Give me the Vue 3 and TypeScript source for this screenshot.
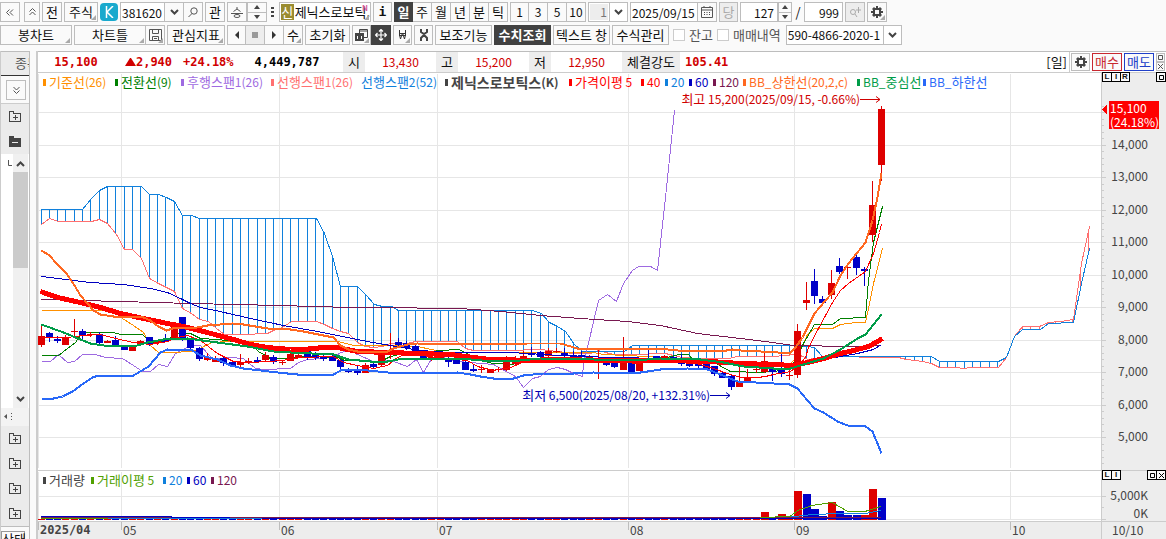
<script setup lang="ts">
import { ref } from 'vue'

type Pt = [number, number]
type Candle = [number, number, number, number, 0 | 1]

const STEP = 8.317
const FIRST = 41
const xAt = (i: number) => Math.floor(FIRST + STEP * i)

const parse = (s: string): Pt[] =>
  s.trim().split(/\s+/).map((p) => p.split(',').map(Number) as Pt)

const yOn = (pts: Pt[], x: number): number => {
  for (let k = 1; k < pts.length; k++) {
    const [x0, y0] = pts[k - 1]
    const [x1, y1] = pts[k]
    if (x <= x1) return y0 + ((y1 - y0) * Math.max(0, x - x0)) / (x1 - x0)
  }
  return pts[pts.length - 1][1]
}

const spanB = '41,209 82,209 91,198 99,190 107,186 141,186 149,194 158,194 166,197 174,201 182,215 191,215 199,218 316,218 324,233 332,256 340,286 357,286 365,294 374,304 382,306 391,306 398,310 532,310 541,313 549,322 557,326 565,331 574,344 582,351 624,351 632,345 797,345 806,346 814,347 822,356 931,356 939,361 998,361 1006,357 1014,336 1022,329 1040,329 1048,323 1073,322 1081,283 1089,248'
const spanA = '41,224 49,218 58,221 91,221 99,219 107,223 116,234 124,249 132,249 141,258 149,278 158,283 166,287 174,291 182,308 191,313 199,319 208,321 216,328 224,334 243,334 267,333 275,329 282,327 291,321 316,321 324,324 332,328 340,331 348,333 357,342 365,346 373,347 382,346 390,343 407,343 415,341 457,341 465,348 473,350 507,350 540,349 557,351 573,353 590,353 598,350 605,352 613,354 633,354 665,353 673,355 682,357 698,358 728,358 737,356 773,356 795,354 803,356 807,359 823,357 840,356 877,357 898,357 906,359 922,361 931,363 939,367 955,367 964,368 970,367 998,367 1006,357 1014,336 1022,326 1039,326 1048,322 1060,321 1073,319 1081,263 1089,226'

const a = parse(spanA)
const b = parse(spanB)
const hatch = Array.from({ length: 127 }, (_, i) => {
  const x = xAt(i)
  const ya = yOn(a, x)
  const yb = yOn(b, x)
  return { x: x + 0.5, y1: Math.min(ya, yb), y2: Math.max(ya, yb), up: ya < yb }
}).filter((h) => h.y2 - h.y1 > 1)

const backLines = [
  { c: 'span-a', p: spanA },
  { c: 'span-b', p: spanB },
  { c: 'lagging', p: '41,361 50,361 58,354 67,362 74,361 82,354 95,354 105,357 122,358 133,365 142,371 150,371 158,364 167,366 175,353 188,346 200,345 207,353 213,359 230,357 243,358 255,368 263,369 290,368 298,362 307,359 333,357 340,352 350,350 357,354 373,361 390,360 407,366 416,359 423,372 432,357 443,357 457,361 470,362 493,364 515,376 523,387 532,378 540,376 548,369 557,367 565,369 573,373 582,376 583,363 587,347 598,300 607,294 616,301 623,283 632,270 638,266 650,266 657,270 665,197 674,110' },
  { c: 'base', p: '41,310 117,310 122,318 133,325 143,332 150,345 158,352 175,352 197,350 203,346 212,342 227,341 338,341 353,345 390,345 417,346 445,352 570,352 593,352 603,354 647,356 707,360 740,364 790,363 793,360 798,354 807,334 814,328 832,328 840,324 855,322 865,322 868,308 873,283 882,248' },
  { c: 'conv', p: '41,355 58,355 67,348 75,342 82,332 113,332 120,334 142,334 150,342 166,340 175,333 190,333 200,338 217,339 233,341 253,345 258,351 270,358 290,358 300,356 337,357 345,360 380,361 390,356 403,353 423,352 440,350 458,349 465,352 480,360 493,363 513,364 523,358 573,359 627,358 663,358 678,354 688,354 693,360 710,360 730,371 760,372 782,370 793,363 798,353 803,343 814,324 832,324 840,318 865,317 868,280 873,242 882,206' },
]

const frontLines = [
  { c: 'ma120', p: '41,299 120,301 190,303 235,304 280,305 312,306 352,307 393,307 440,308 460,308 500,311 540,315 580,318 627,321 660,325 697,333 740,338 765,341 793,345 850,346 881,345' },
  { c: 'ma5', p: '41,337 67,337 83,335 100,334 115,338 133,342 150,344 167,341 177,337 187,335 200,340 217,353 233,361 247,362 270,361 290,359 300,357 333,356 343,362 357,365 373,368 387,365 397,357 407,353 443,358 467,360 477,366 493,370 510,367 527,360 543,357 577,357 603,360 637,363 660,360 693,362 713,368 727,373 740,377 757,377 765,376 773,374 790,371 798,365 805,357 808,347 818,328 832,302 840,290 848,283 865,271 873,253 879,232 881,224' },
  { c: 'ma60', p: '41,276 90,282 123,284 150,288 167,292 182,299 190,303 200,307 215,310 250,318 283,325 317,331 347,337 367,341 390,345 407,348 420,350 450,352 510,352 560,355 610,357 667,358 727,361 760,362 807,363 823,359 840,356 857,353 873,349 881,344' },
  { c: 'ma40', p: '40,291 57,297 80,302 100,307 120,313 143,318 167,323 183,326 203,331 233,339 250,344 267,347 290,349 303,349 323,347 337,347 357,351 390,352 417,353 450,354 473,357 490,359 540,360 660,360 710,361 740,363 773,364 793,365 807,362 823,358 840,353 853,350 868,346 877,341 882,338' },
  { c: 'bb-mid', p: '41,324 63,332 80,339 90,343 103,345 133,346 147,342 163,339 187,338 217,342 247,346 273,351 290,352 333,354 348,359 370,361 387,361 403,358 430,358 470,359 493,361 520,360 540,358 593,359 633,360 660,358 700,359 723,362 743,366 773,368 790,368 803,364 823,358 840,349 857,338 865,334 873,324 881,314' },
  { c: 'bb-up', p: '41,250 49,255 57,264 66,273 74,285 80,295 87,303 93,310 100,314 113,316 133,316 143,317 150,320 158,326 166,330 172,328 197,327 207,325 232,323 243,324 267,328 290,329 303,331 323,335 333,337 340,345 348,349 357,351 387,351 393,348 407,344 417,343 470,344 527,343 560,343 577,348 627,348 667,349 677,350 720,351 732,349 740,350 760,351 777,352 789,353 795,347 802,337 814,313 825,300 832,292 840,275 848,263 865,242 872,220 877,197 881,173' },
  { c: 'bb-low', p: '41,398 53,398 62,396 72,391 83,383 92,377 98,375 133,375 148,366 160,352 167,349 192,350 200,355 217,359 230,365 243,368 277,372 297,374 333,374 342,369 357,369 387,372 403,373 457,372 470,374 480,376 493,378 513,378 523,375 543,373 573,373 593,372 633,373 647,371 660,369 687,368 707,369 720,374 737,381 773,383 789,384 797,388 807,400 814,408 823,412 837,421 847,425 865,426 872,431 877,443 881,453' },
]

// high, low, body top, body bottom, 1 = rising
const candles: Candle[] = [
  [325, 347, 336, 345, 1], [332, 342, 333, 337, 0], [336, 343, 339, 341, 0], [335, 345, 338, 345, 1], [319, 337, 331, 332, 1],
  [329, 339, 331, 336, 0], [332, 337, 334, 335, 1], [332, 344, 334, 343, 0], [340, 343, 341, 343, 1], [336, 347, 340, 346, 0],
  [345, 350, 347, 350, 0], [346, 351, 347, 351, 1], [340, 346, 341, 345, 1], [337, 346, 337, 345, 0], [340, 345, 341, 343, 1],
  [334, 342, 340, 342, 0], [327, 338, 327, 338, 1], [317, 341, 317, 340, 0], [339, 349, 340, 348, 0], [347, 361, 348, 359, 0],
  [353, 361, 357, 360, 1], [356, 362, 359, 362, 1], [356, 366, 358, 363, 0], [362, 367, 362, 366, 0], [354, 367, 362, 365, 1],
  [358, 364, 361, 363, 1], [357, 362, 360, 362, 0], [352, 361, 355, 360, 1], [355, 364, 357, 362, 0], [360, 365, 362, 363, 1],
  [353, 361, 354, 361, 1], [353, 358, 355, 358, 1], [350, 360, 351, 357, 0], [352, 360, 353, 358, 0], [355, 361, 357, 359, 0],
  [355, 361, 356, 361, 0], [359, 369, 360, 367, 0], [368, 373, 370, 372, 0], [366, 375, 370, 373, 0], [363, 373, 365, 373, 1],
  [362, 368, 364, 367, 0], [354, 367, 355, 365, 1], [333, 359, 345, 346, 1], [338, 347, 342, 345, 0], [341, 350, 343, 348, 0],
  [345, 352, 346, 351, 0], [353, 360, 354, 360, 0], [356, 361, 357, 360, 1], [355, 359, 356, 359, 1], [357, 367, 358, 362, 0],
  [359, 364, 360, 364, 0], [361, 370, 362, 370, 0], [365, 372, 369, 371, 0], [365, 373, 369, 370, 1], [369, 373, 369, 373, 1],
  [367, 372, 369, 370, 1], [356, 371, 362, 370, 1], [356, 365, 358, 364, 1], [351, 360, 356, 359, 1], [347, 357, 353, 355, 0],
  [351, 357, 352, 357, 0], [348, 357, 351, 356, 1], [348, 353, 351, 352, 1], [348, 357, 353, 356, 0], [351, 360, 355, 358, 0],
  [351, 360, 355, 356, 0], [355, 360, 356, 359, 1], [350, 379, 358, 360, 1], [361, 366, 362, 365, 0], [361, 368, 362, 367, 0],
  [337, 370, 362, 370, 1], [361, 372, 362, 372, 0], [361, 371, 362, 371, 1], [349, 360, 358, 360, 0], [356, 359, 356, 358, 0],
  [355, 359, 356, 358, 1], [356, 362, 357, 361, 0], [354, 366, 360, 364, 0], [360, 367, 364, 366, 0], [362, 368, 363, 366, 0],
  [363, 370, 363, 369, 0], [366, 376, 366, 374, 0], [372, 378, 373, 378, 0], [375, 390, 376, 387, 0], [363, 387, 382, 387, 1],
  [369, 382, 377, 381, 1], [363, 373, 369, 370, 1], [352, 373, 361, 372, 1], [366, 381, 369, 372, 0], [353, 377, 369, 374, 0],
  [370, 380, 375, 376, 1], [324, 378, 331, 375, 1], [282, 310, 300, 303, 1], [269, 304, 281, 296, 0], [296, 306, 299, 303, 0],
  [270, 299, 283, 295, 1], [258, 274, 266, 272, 0], [267, 279, 267, 268, 1], [255, 275, 257, 268, 0], [267, 286, 269, 271, 0],
  [181, 242, 205, 235, 1], [106, 181, 109, 165, 1],
]

const bigVolume: Record<number, number> = {
  87: 8, 89: 6, 91: 29, 92: 26, 93: 11, 94: 4, 95: 18, 96: 9, 97: 5, 98: 5, 99: 5, 100: 31, 101: 22,
}
const redVolume = new Set([87, 89, 91, 95, 99, 100])
const volumes = candles.map((c, i) => ({
  x: xAt(i) - 3,
  h: bigVolume[i] ?? 1,
  up: i in bigVolume ? redVolume.has(i) : c[4] === 1,
}))

const gridY = Array.from({ length: 11 }, (_, i) => Math.floor(437.5 - 32.5 * i))
const prices = gridY.slice(0, 10).map((y, i) => ({ y, text: (5000 + i * 1000).toLocaleString('en-US') }))
const minorY = Array.from({ length: 60 }, (_, i) => Math.floor(463.5 - 6.5 * i)).filter((y) => y > 100)

const pct = (x: number) => ((x - 38) / 1063) * 100 + '%'
const months = [
  { x: 38, t: '2025/04' }, { x: 121, t: '05' }, { x: 279, t: '06' }, { x: 437, t: '07' },
  { x: 628, t: '08' }, { x: 794, t: '09' }, { x: 1010, t: '10' },
]

interface Entry { t: string; c: string; mark?: boolean; bold?: boolean }
const legend: Entry[] = [
  { t: '기준선(26)', c: 'base' }, { t: '전환선(9)', c: 'conv' }, { t: '후행스팬1(26)', c: 'lagging' },
  { t: '선행스팬1(26)', c: 'span-a' }, { t: '선행스팬2(52)', c: 'span-b', mark: false },
  { t: '제닉스로보틱스(K)', c: 'ink', bold: true }, { t: '가격이평 5', c: 'red' }, { t: '40', c: 'red' },
  { t: '20', c: 'span-b' }, { t: '60', c: 'ma60' }, { t: '120', c: 'ma120' },
  { t: 'BB_상한선(20,2,c)', c: 'bb-up' }, { t: 'BB_중심선', c: 'bb-mid' }, { t: 'BB_하한선', c: 'bb-low' },
]
const volLegend: Entry[] = [
  { t: '거래량', c: 'ink' }, { t: '거래이평 5', c: 'vol5' }, { t: '20', c: 'span-b' },
  { t: '60', c: 'ma60' }, { t: '120', c: 'ma120' },
]
const notes = {
  high: '최고 15,200(2025/09/15, -0.66%)',
  low: '최저 6,500(2025/08/20, +132.31%)',
}
const cells = (s: string) => [...s].reduce((n, ch) => n + (ch > '\u3000' ? 2 : 1), 0)
const entryWidth = (e: Entry) => cells(e.t) * 6 + (e.mark === false ? 6 : 12) + (e.bold ? 10 : 0) + 'px'
// Latin runs are set one size smaller than Hangul runs
const runs = (s: string) =>
  (s.match(/[ -~]+|[^ -~]+/g) ?? []).map((t) => ({ t, latin: t < '\u007f' }))

const periods = ['일', '주', '월', '년', '분', '틱']
const period = ref('일')
const counts = ['1', '3', '5', '10']
const code = ref('381620')
const date = ref('2025/09/15')
const shown = ref('127')
const total = ref('999')
const balance = ref(false)
const trades = ref(false)
</script>

<template>
  <div class="app">
    <svg class="defs" aria-hidden="true">
      <symbol id="i-chev" viewBox="0 0 9 6"><path d="M1 1l3.500 3.500L8 1" fill="none" stroke="#444" stroke-width="2" /></symbol>
      <symbol id="i-gear" viewBox="0 0 12 12">
        <path d="M5 0h2v2h1l1-1 2 2-1 1v1h2v2h-2v1l1 1-2 2-1-1H7v2H5v-2H4l-1 1-2-2 1-1V7H0V5h2V4L1 3l2-2 1 1h1zM4 4v4h4V4z" fill="#444" fill-rule="evenodd" />
      </symbol>
      <symbol id="i-folder" viewBox="0 0 12 11">
        <path d="M.5.500h4v2h7v8H.5zM6 4v5M3.500 6.500h5" fill="none" stroke="#444" stroke-width="1" shape-rendering="crispEdges" />
      </symbol>
      <symbol id="i-up" viewBox="0 0 6 4"><path d="M0 4h6L3 0z" fill="#444" /></symbol>
      <symbol id="i-down" viewBox="0 0 6 4"><path d="M0 0h6L3 4z" fill="#444" /></symbol>
      <symbol id="i-corner" viewBox="0 0 5 5"><path d="M5 0v5H0z" fill="#aaa" /></symbol>
    </svg>

    <header class="bars">
      <div class="bar">
        <button class="w20" aria-label="이전"><svg width="8" height="7"><path d="M3.500 .5l-3 3 3 3M7 .5l-3 3 3 3" class="thin" /></svg></button>
        <button class="w16 push" aria-label="접기"><svg width="7" height="8"><path d="M.5 3.500l3-3 3 3M.5 7l3-3 3 3" class="thin" /></svg></button>
        <button class="w20">전</button>
        <button class="w34">주식<svg class="corner"><use href="#i-corner" /></svg></button>
        <button class="kbtn" aria-label="코스닥"><svg width="10" height="12"><path d="M2.500 0v12M9 0L3 6l6 6" fill="none" stroke="#fff" stroke-width="1.500" /></svg></button>
        <div class="group">
          <input v-model="code" class="w45 code" aria-label="종목코드" />
          <button class="w19" aria-label="목록"><svg width="9" height="6"><use href="#i-chev" /></svg></button>
          <button class="w19" aria-label="검색"><svg width="10" height="10"><circle cx="6" cy="4" r="3.200" class="thin" /><path d="M4 6.500L.5 10" class="thin" /></svg></button>
        </div>
        <button class="w20">관</button>
        <div class="group">
          <button class="w20" aria-label="승"><svg width="12" height="11"><path d="M6 0v2L2.500 4.500M6 2l3.500 2.500M0 6.500h12M6 6.500V8" class="thin" /><ellipse cx="6" cy="9" rx="3" ry="1.500" class="thin" /></svg></button>
          <span class="spin w20">
            <button aria-label="위"><svg width="6" height="4"><use href="#i-up" /></svg></button>
            <button aria-label="아래"><svg width="6" height="4"><use href="#i-down" /></svg></button>
          </span>
          <button class="w10 bare" aria-label="더보기"><svg width="3" height="11"><path d="M0 0h3v2H0zM0 4h3v2H0zM0 8h3v2H0z" fill="#444" /></svg></button>
        </div>
        <button class="name"><b>신</b><span>제닉스로보틱.</span><i>N</i><svg class="corner"><use href="#i-corner" /></svg></button>
        <button class="w19 info">i</button>
        <div class="group">
          <button v-for="p in periods" :key="p" class="w19" :class="{ on: p === period }" @click="period = p">{{ p }}</button>
        </div>
        <div class="group">
          <button v-for="n in counts" :key="n" class="w19 small">{{ n }}</button>
        </div>
        <label class="pick w40 muted">
          <select aria-label="간격"><option>1</option></select>
          <span><svg width="9" height="6"><use href="#i-chev" /></svg></span>
        </label>
        <div class="group">
          <input v-model="date" class="w68" aria-label="날짜" />
          <button class="w19" aria-label="달력"><svg width="12" height="12"><path d="M.5 1.500h11v10H.5zM.5 4h11M3 0v2M9 0v2" class="thin" /><path d="M3 6h1v1H3zM5.500 6h1v1h-1zM8 6h1v1H8zM3 8h1v1H3zM5.500 8h1v1h-1zM8 8h1v1H8z" fill="#444" /></svg></button>
        </div>
        <button class="w19 off">당</button>
        <div class="group">
          <input v-model="shown" class="w38 num" aria-label="표시 봉수" />
          <span class="spin w14">
            <button aria-label="증가"><svg width="6" height="4"><use href="#i-up" /></svg></button>
            <button aria-label="감소"><svg width="6" height="4"><use href="#i-down" /></svg></button>
          </span>
        </div>
        <span class="slash">/</span>
        <input v-model="total" class="w39 num" aria-label="전체 봉수" />
        <button class="w20 off" aria-label="확대"><svg width="12" height="10"><circle cx="4" cy="5" r="2.500" class="faint" /><path d="M6 7l2 3M9.500 0v6M7 3h5" class="faint" /></svg></button>
        <button class="w20" aria-label="설정"><svg width="12" height="12"><use href="#i-gear" /></svg><svg class="corner"><use href="#i-corner" /></svg></button>
      </div>

      <div class="bar">
        <button class="w72">봉차트<svg class="corner"><use href="#i-corner" /></svg></button>
        <div class="group">
          <button class="w72">차트틀<svg class="corner"><use href="#i-corner" /></svg></button>
          <button class="w19" aria-label="저장"><svg width="13" height="12"><path d="M.5.500h12v11H.5zM3.500.500v4h6v-4M3.500 11.500v-4h6v4M5 9.500h3" class="thin" /></svg><svg class="corner"><use href="#i-corner" /></svg></button>
        </div>
        <button class="w58">관심지표<svg class="corner"><use href="#i-corner" /></svg></button>
        <div class="group">
          <button class="w19" aria-label="왼쪽"><svg width="4" height="8"><path d="M4 0v8L0 4z" fill="#333" /></svg></button>
          <button class="w19 shade" aria-label="정지"><svg width="6" height="6"><path d="M0 0h6v6H0z" fill="#999" /></svg></button>
          <button class="w19" aria-label="오른쪽"><svg width="4" height="8"><path d="M0 0v8l4-4z" fill="#333" /></svg></button>
          <button class="w19">수<svg class="corner"><use href="#i-corner" /></svg></button>
        </div>
        <button class="w45">초기화</button>
        <div class="group">
          <button class="w19" aria-label="창 배열"><svg width="13" height="12"><path d="M4.500 4V.500h8v8H9M4.500 2h8" fill="none" stroke="#444" stroke-width="1" /><path d="M0 4h9v8H0zM2 7v3h1V7zM6 7v3h1V7z" fill="#444" fill-rule="evenodd" /></svg><svg class="corner"><use href="#i-corner" /></svg></button>
          <button class="w20 on" aria-label="십자선"><svg width="12" height="12"><path d="M6 1v10M1 6h10M4 2.500L6 .5l2 2M4 9.500l2 2 2-2M2.500 4l-2 2 2 2M9.500 4l2 2-2 2" fill="none" stroke="#fff" stroke-width="1.200" /></svg></button>
        </div>
        <button class="w19" aria-label="원화"><svg width="7" height="10"><path d="M.5 0v5l1 4 2-6 2 6 1-4V0M0 3.500h7M0 5.500h7" fill="none" stroke="#333" /></svg><svg class="corner"><use href="#i-corner" /></svg></button>
        <button class="w19" aria-label="도구"><svg width="8" height="12"><path d="M1 0v3l3 2 3-2V0M1 12V9l3-3 3 3v3" fill="none" stroke="#444" stroke-width="2" /></svg></button>
        <button class="w57">보조기능</button>
        <button class="w57 on">수치조회</button>
        <button class="w57">텍스트 창</button>
        <button class="w57">수식관리</button>
        <label class="check"><input v-model="balance" type="checkbox" />잔고</label>
        <label class="check"><input v-model="trades" type="checkbox" />매매내역</label>
        <label class="pick account">
          <select aria-label="계좌번호"><option>590-4866-2020-1</option></select>
          <span><svg width="9" height="6"><use href="#i-chev" /></svg></span>
        </label>
      </div>
    </header>

    <main class="body">
      <aside class="side">
        <div class="tab">종목</div>
        <div class="fold"><button aria-label="펼치기"><svg width="7" height="8"><path d="M.5 1l3 3 3-3M.5 4.500l3 3 3-3" class="thin" /></svg></button></div>
        <button class="node" aria-label="폴더 열기"><svg width="12" height="11"><use href="#i-folder" /></svg></button>
        <button class="node" aria-label="폴더 닫기"><svg width="12" height="11"><path d="M0 0h5v2h7v9H0zM3 6v1h6V6z" fill="#444" fill-rule="evenodd" /></svg></button>
        <div class="tree">
          <div class="leaf"><svg width="4" height="6"><path d="M.5 0v5.500H4" class="thin" /></svg></div>
          <div class="scroll">
            <svg width="9" height="6" class="flip"><use href="#i-chev" /></svg>
            <div class="thumb"></div>
            <svg width="9" height="6"><use href="#i-chev" /></svg>
          </div>
        </div>
        <div class="split"><svg width="9" height="7"><path d="M3 1v5L0 3.500zM7 0h1v1H7zM7 3h1v1H7zM7 6h1v1H7z" fill="#555" /></svg></div>
        <button v-for="n in 4" :key="n" class="node" aria-label="폴더 열기"><svg width="12" height="11"><use href="#i-folder" /></svg></button>
        <div class="foot"><span>상태</span></div>
      </aside>

      <section class="chart">
        <div class="quote">
          <strong class="q1">15,100</strong>
          <strong class="q2"><svg width="11" height="8"><path d="M0 8h11L6 0H5z" fill="#d00000" /></svg>2,940</strong>
          <strong class="q3">+24.18%</strong>
          <strong class="q4">4,449,787</strong>
          <span class="tag">시</span><span class="val">13,430</span>
          <span class="tag">고</span><span class="val">15,200</span>
          <span class="tag">저</span><span class="val">12,950</span>
          <span class="tag wide">체결강도</span><strong class="q5">105.41</strong>
          <span class="unit">[일]</span>
          <button class="cog" aria-label="설정"><svg width="12" height="12"><use href="#i-gear" /></svg></button>
          <button class="buy">매수</button>
          <button class="sell">매도</button>
          <span class="win">
            <button aria-label="최대화"><svg width="5" height="5"><path d="M.5.500h4v4h-4z" class="thin" /></svg></button>
            <button aria-label="닫기"><svg width="5" height="5"><path d="M0 0l5 5M5 0L0 5" class="thin" /></svg></button>
          </span>
        </div>

        <div class="pane">
          <div class="plot">
            <svg class="canvas price" viewBox="38 73 1063 397" preserveAspectRatio="none" shape-rendering="crispEdges">
              <g class="grid">
                <path v-for="y in gridY" :key="y" :d="`M38 ${y + 0.5}H1101`" />
                <path v-for="m in months" :key="m.x" :d="`M${m.x + 0.5} 74V468`" />
              </g>
              <path v-for="h in hatch" :key="h.x" :d="`M${h.x} ${h.y1}V${h.y2}`" :class="h.up ? 'span-a' : 'span-b'" />
              <polyline v-for="l in backLines" :key="l.c" :points="l.p" :class="l.c" transform="translate(0.500 0.500)" />
              <g v-for="(c, i) in candles" :key="i" :class="c[4] ? 'rise' : 'fall'">
                <rect :x="xAt(i)" :y="c[0]" width="1" :height="c[1] - c[0]" />
                <rect :x="xAt(i) - 3" :y="c[2]" width="7" :height="c[3] - c[2]" />
              </g>
              <polyline v-for="l in frontLines" :key="l.c" :points="l.p" :class="l.c" transform="translate(0.500 0.500)" />
            </svg>
            <div class="legend">
              <span v-for="e in legend" :key="e.t" class="entry" :class="[e.c, { bold: e.bold, nomark: e.mark === false }]" :style="{ width: entryWidth(e) }"><span v-for="r in runs(e.t)" :key="r.t" :class="{ latin: r.latin }">{{ r.t }}</span></span>
            </div>
            <div class="note high" :style="{ right: pct(258) }"><span v-for="r in runs(notes.high)" :key="r.t" :class="{ latin: r.latin }">{{ r.t }}</span><svg width="21" height="7"><path d="M0 3.500h20M16 .5l4 3-4 3" fill="none" stroke="currentColor" /></svg></div>
            <div class="note low" :style="{ right: pct(408) }"><span v-for="r in runs(notes.low)" :key="r.t" :class="{ latin: r.latin }">{{ r.t }}</span><svg width="21" height="7"><path d="M0 3.500h20M16 .5l4 3-4 3" fill="none" stroke="currentColor" /></svg></div>
          </div>
          <div class="axis">
            <svg width="64" height="397" viewBox="1102 73 64 397" shape-rendering="crispEdges">
              <path v-for="y in minorY" :key="y" :d="`M1102 ${y + 0.5}h2`" class="tick" />
              <path v-for="y in gridY" :key="'g' + y" :d="`M1102 ${y + 0.5}h4`" class="tick" />
              <text v-for="p in prices" :key="p.text" x="1148" :y="p.y + 4" text-anchor="end">{{ p.text }}</text>
              <path d="M1102 109.500l5-5v10z" fill="#f00" />
            </svg>
            <div class="now"><span>15,100</span><span>(24.18%)</span></div>
            <div class="mini left"><button>L</button><button>I</button><button>R</button></div>
            <div class="mini right"><button aria-label="최대화"><svg width="5" height="5"><path d="M.5.500h4v4h-4z" class="black" /></svg></button></div>
          </div>
        </div>

        <div class="pane volume">
          <div class="plot">
            <svg class="canvas vol" viewBox="38 471 1063 50" preserveAspectRatio="none" shape-rendering="crispEdges">
              <g class="grid">
                <path d="M38 496.500H1101M38 519.500H1101" />
                <path v-for="m in months" :key="m.x" :d="`M${m.x + 0.5} 472V520`" />
              </g>
              <rect v-for="(v, i) in volumes" :key="i" :x="v.x" :y="520 - v.h" :width="v.h > 1 ? 8 : 7" :height="v.h" :class="v.up ? 'rise' : 'fall'" />
              <polyline points="41,518.500 760,518.500 795,516.500 812,514.500 840,513.500 865,513.500 881,510.500" class="span-b" />
              <polyline points="41,518.500 108,518.500" class="vol5" />
              <polyline points="262,518.500 881,518.500" class="ma60" />
              <polyline points="41,517.500 881,517.500" class="ma120" />
              <polyline points="41,516.500 171,516.500 172,517.500 230,517.500" class="ma60" />
              <polyline points="760,517.500 790,516.500 798,510.500 812,505.500 832,502.500 848,511.500 865,511.500 881,506.500" class="vol5" />
            </svg>
            <div class="legend">
              <span v-for="e in volLegend" :key="e.t" class="entry" :class="e.c" :style="{ width: entryWidth(e) }"><span v-for="r in runs(e.t)" :key="r.t" :class="{ latin: r.latin }">{{ r.t }}</span></span>
            </div>
          </div>
          <div class="axis">
            <svg width="64" height="50" viewBox="1102 471 64 50" shape-rendering="crispEdges">
              <path d="M1102 496.500h4M1102 507.500h2M1102 519.500h4" class="tick" />
              <text x="1148" y="500" text-anchor="end">5,000K</text>
              <text x="1148" y="518" text-anchor="end">0K</text>
            </svg>
            <div class="mini left"><button>L</button><button>I</button></div>
            <div class="mini right">
              <button aria-label="최대화"><svg width="5" height="5"><path d="M.5.500h4v4h-4z" class="black" /></svg></button>
              <button aria-label="닫기"><svg width="5" height="5"><path d="M0 0l5 5M5 0L0 5" class="black" /></svg></button>
            </div>
          </div>
        </div>

        <div class="time">
          <div class="months">
            <span v-for="m in months" :key="m.x" :style="{ left: pct(m.x) }">{{ m.t }}</span>
          </div>
          <div class="range">10/10</div>
        </div>
      </section>
    </main>
  </div>
</template>

<style>
html, body { background: #fafafa; overflow: hidden; }
</style>

<style scoped>
.app, .app button, .app input, .app select {
  font-family: "Noto Sans CJK KR", sans-serif;
  font-size: 13px;
  line-height: 16px;
  color: #111;
}
.app { display: flex; flex-direction: column; min-height: 100vh; background: #fafafa; white-space: nowrap; }
.app *, .app { box-sizing: border-box; }
.app input, .app select, .app .small, .latin, .val, .now, .time { font-size: 12px; }
.defs { position: absolute; width: 0; height: 0; }
svg { display: block; flex: none; }
.thin { fill: none; stroke: #555; }
.black { fill: none; stroke: #000; }
.faint { fill: none; stroke: #aaa; }
button { position: relative; display: flex; align-items: center; justify-content: center; flex: none; padding: 0; margin: 0; border: 1px solid #bdbdbd; border-radius: 0; background: #fafafa; overflow: hidden; }
input, select { border: 1px solid #bdbdbd; border-radius: 0; background: #fff; padding: 0 1px; margin: 0; outline: none; }

.bars { display: flex; flex-direction: column; gap: 3px; padding: 2px 0 6px; height: 51px; flex: none; }
.bar { display: flex; gap: 2px; height: 20px; }
.bar > *, .bar .group > * { height: 20px; flex: none; }
.group { display: flex; }
.group > * + * { border-left: 0; }
.corner { position: absolute; right: 1px; bottom: 1px; width: 5px; height: 5px; }
.push { margin-left: 2px; }
.w10 { width: 10px; } .w14 { width: 14px; } .w16 { width: 16px; } .w19 { width: 19px; } .w20 { width: 20px; }
.w34 { width: 34px; } .w38 { width: 38px; } .w39 { width: 39px; } .w40 { width: 40px; } .w45 { width: 45px; }
.w57 { width: 57px; } .w58 { width: 58px; } .w68 { width: 68px; } .w72 { width: 72px; }
.bar button.on { background: #414141; border-color: #414141; color: #fff; font-weight: bold; }
.bar button.off { background: #ededed; color: #aaa; }
.bar button.shade { background: #ededed; }
.bar button.bare { border: 0; }
.bar button.info { font-family: "DejaVu Sans Mono", monospace; font-weight: bold; }
.bar .kbtn { width: 18px; height: 18px; margin-top: 1px; border: 0; border-radius: 4px; background: #19a9cd; }
.num { text-align: right; padding-right: 3px; }
.spin { display: flex; flex-direction: column; border: 1px solid #bdbdbd; }
.spin button { flex: 1; border: 0; }
.spin button + button { border-top: 1px solid #bdbdbd; }
.bar .name { width: 92px; justify-content: flex-start; padding-left: 1px; background: #fff; }
.name b { width: 16px; height: 16px; background: #9a8c30; color: #fff; font-weight: normal; margin-right: 1px; }
.name i { position: absolute; right: 2px; top: 1px; font-size: 8px; line-height: 8px; font-weight: bold; font-style: normal; color: #d85a9a; }
.pick { display: flex; border: 1px solid #bdbdbd; background: #fff; }
.pick select { flex: 1; min-width: 0; border: 0; appearance: none; }
.pick span { width: 18px; display: flex; align-items: center; justify-content: center; border-left: 1px solid #bdbdbd; }
.muted select { background: #ededed; color: #777; text-align: right; margin: 1px; }
.account { width: 116px; margin-left: 3px; }
.slash { width: 8px; text-align: center; line-height: 20px; }
.check { display: flex; align-items: center; gap: 4px; margin-left: 2px; color: #555; }
.check input { appearance: none; width: 12px; height: 12px; padding: 0; border-color: #ccc; }

.body { display: flex; flex: 1; }
.side { width: 30px; flex: none; display: flex; flex-direction: column; border-left: 1px solid #ccc; border-right: 1px solid #bdbdbd; background: #ebebeb; overflow: hidden; margin-right: 6px; }
.tab { height: 25px; padding: 3px 0 0 14px; border-top: 1px solid #bdbdbd; border-bottom: 1px solid #333; color: #555; overflow: hidden; }
.fold { height: 28px; padding: 4px 0 0 2px; border-bottom: 1px solid #ccc; background: #fafafa; }
.fold button { width: 20px; height: 20px; margin-left: 3px; }
.node { height: 25px; border: 0; background: #ebebeb; padding-right: 1px; }
.tree { flex: 1; display: flex; background: #fff; }
.leaf { width: 12px; padding: 6px 0 0 7px; }
.scroll { width: 15px; display: flex; flex-direction: column; align-items: center; background: #f0f0f0; padding: 7px 0 6px; }
.thumb { width: 15px; height: 96px; background: #cbcbcb; margin: 5px 0 auto; }
.flip { transform: rotate(180deg); }
.split { height: 18px; padding: 5px 0 0 3px; background: #f3f3f3; }
.foot { height: 14px; border-top: 1px solid #bdbdbd; background: #fafafa; padding-top: 4px; overflow: hidden; }
.foot span { display: block; width: 24px; height: 16px; border: 1px solid #999; line-height: 14px; }

.chart { flex: 1; min-width: 0; display: flex; flex-direction: column; border-left: 2px solid #ccc; background: #fff; }
.quote { display: flex; align-items: center; height: 22px; border-top: 1px solid #bdbdbd; border-bottom: 1px solid #ccc; }
.quote > * { flex: none; text-align: center; }
.quote strong { font: bold 12px/16px "DejaVu Sans Mono", monospace; color: #d00000; }
.q1 { width: 76px; } .q2 { width: 69px; display: flex; align-items: center; justify-content: center; } .q3 { width: 48px; }
.quote .q4 { width: 112px; color: #000; }
.q5 { margin-left: 5px; }
.tag { width: 22px; height: 20px; line-height: 19px; background: #ededed; }
.tag.wide { width: 58px; }
.val { width: 71px; color: #d00000; }
.unit { margin-left: auto; padding-right: 2px; height: 20px; line-height: 19px; border-right: 1px solid #ccc; }
.cog { width: 19px; height: 18px; margin-left: 1px; }
.quote .buy, .quote .sell { width: 30px; height: 18px; margin-left: 2px; }
.quote .buy { border-color: #c8282f; color: #c8282f; }
.quote .sell { border-color: #2040c8; color: #2040c8; }
.win { display: flex; flex-direction: column; width: 9px; margin: 0 1px 0 2px; }
.win button { width: 9px; height: 9px; }

.pane { display: flex; position: relative; border-bottom: 1px solid #ccc; }
.plot { flex: 1; min-width: 0; position: relative; }
.canvas { width: 100%; }
.canvas path, .canvas polyline { fill: none; stroke-width: 1; }
.price { height: 397px; }
.vol { height: 50px; }
.grid path { stroke: #e6e6e6; }
.axis { width: 65px; flex: none; position: relative; border-left: 1px solid #ccc; background: #ededed; }
.axis text { font-size: 12px; fill: #444; }
.tick { stroke: #ccc; }
.rise { fill: #de0000; }
.fall { fill: #0000c8; }
.base { stroke: #ff9000; color: #ff9000; }
.conv { stroke: #008000; color: #008000; }
.lagging { stroke: #9e6ae1; color: #9e6ae1; }
.span-a { stroke: #ff7070; color: #ff7070; }
.span-b { stroke: #1080dc; color: #1080dc; }
.ink { color: #444; }
.red { color: #f00; }
.ma5 { stroke: #f00; }
.ma60 { stroke: #0000c0; color: #0000c0; }
.ma120 { stroke: #781850; color: #781850; }
.vol5 { stroke: #50a000; color: #50a000; }
.bb-up { stroke: #ff6820; color: #ff6820; }
.bb-mid { stroke: #009c48; color: #009c48; }
.bb-low { stroke: #2868f8; color: #2868f8; }
.canvas .ma40 { stroke: #f00; stroke-width: 5; }
.canvas .bb-up, .canvas .bb-mid, .canvas .bb-low { stroke-width: 2; }
.legend { position: absolute; left: 5px; top: 1px; display: flex; white-space: pre; }
.entry { flex: none; display: flex; align-items: center; height: 16px; }
.entry::before { content: ""; width: 3px; height: 7px; background: currentColor; margin-right: 3px; }
.nomark::before { display: none; }
.bold { font-weight: bold; font-size: 14px; }
.note { position: absolute; display: flex; align-items: center; white-space: pre; }
.high { top: 18px; color: #d00000; }
.low { top: 314px; color: #0000b0; }
.now { position: absolute; left: 7px; top: 28px; display: flex; flex-direction: column; width: 50px; padding-left: 1px; background: #f00; color: #fff; }
.now span { height: 14px; line-height: 14px; }
.mini { position: absolute; top: -1px; display: flex; }
.mini.left { left: 0; }
.mini.right { right: 0; }
.mini button { width: 10px; height: 10px; border-color: #000; font: bold 8px/8px "Liberation Sans", sans-serif; }
.mini button + button { margin-left: -1px; }
.time { display: flex; height: 18px; background: #ededed; border-bottom: 1px solid #bdbdbd; color: #444; }
.months { flex: 1; position: relative; }
.months span { position: absolute; top: 0; padding-left: 1px; border-left: 1px solid #bdbdbd; height: 8px; line-height: 16px; }
.months span:first-child { font: bold 12px/16px "DejaVu Sans Mono", monospace; }
.range { width: 65px; border-left: 1px solid #ccc; padding-left: 10px; line-height: 16px; }
</style>
